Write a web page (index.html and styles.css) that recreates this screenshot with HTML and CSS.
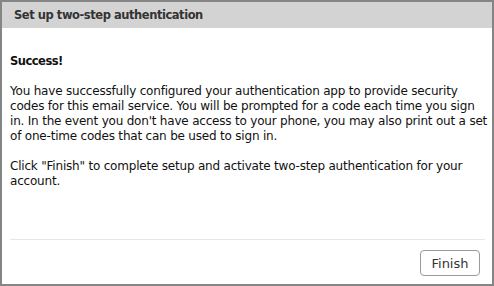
FILE: index.html
```html
<!DOCTYPE html>
<html lang="en">
<head>
    <meta charset="UTF-8">
    <meta name="viewport" content="width=device-width, initial-scale=1.0">
    <title>Set up two-step authentication</title>
    <link rel="stylesheet" href="styles.css">
</head>
<body>
    <div class="dialog">
        <div class="dialog-header">Set up two-step authentication</div>

        <div class="dialog-body">
            <p class="title">Success!</p>
            <p>You have successfully configured your authentication app to provide security codes for this email service. You will be prompted for a code each time you sign in.&nbsp;In the event you don't have access to your phone, you may also print out a set of one-time codes that can be used to sign in.</p>
            <p>Click "Finish" to complete setup and activate two-step authentication for your account.</p>
        </div>

        <div class="dialog-footer">
            <button type="button" class="btn">Finish</button>
        </div>
    </div>
</body>
</html>
```

FILE: styles.css
```css
* {
    margin: 0;
    padding: 0;
    box-sizing: border-box;
    font-family: 'DejaVu Sans', Verdana, sans-serif;
}

body {
    background-color: #fff;
    width: 494px;
    height: 286px;
}

.dialog {
    display: flex;
    flex-direction: column;
    height: 100%;
    border: 2px solid #858585;
    background-color: #fff;
}

.dialog-header {
    height: 26px;
    line-height: 26px;
    padding-left: 12px;
    background-color: #d3d3d3;
    color: #333;
    font-size: 11.5px;
    font-weight: bold;
    letter-spacing: -0.45px;
}

.dialog-body {
    flex: 1;
    padding: 26px 4px 0 8px;
    color: #111;
    font-size: 12px;
    line-height: 15px;
    letter-spacing: -0.2px;
}

.dialog-body p {
    margin-bottom: 15px;
}

.dialog-body .title {
    font-size: 11.5px;
    font-weight: bold;
    letter-spacing: -0.5px;
}

.dialog-footer {
    display: flex;
    justify-content: flex-end;
    margin: 0 7px 0 8px;
    padding: 10px 5px 8px 0;
    border-top: 1px solid #e6e6e6;
}

.btn {
    width: 60px;
    height: 26px;
    border: 1px solid #9a9a9a;
    border-radius: 4px;
    background-color: #fff;
    color: #333;
    font-size: 13px;
    cursor: pointer;
}
```
